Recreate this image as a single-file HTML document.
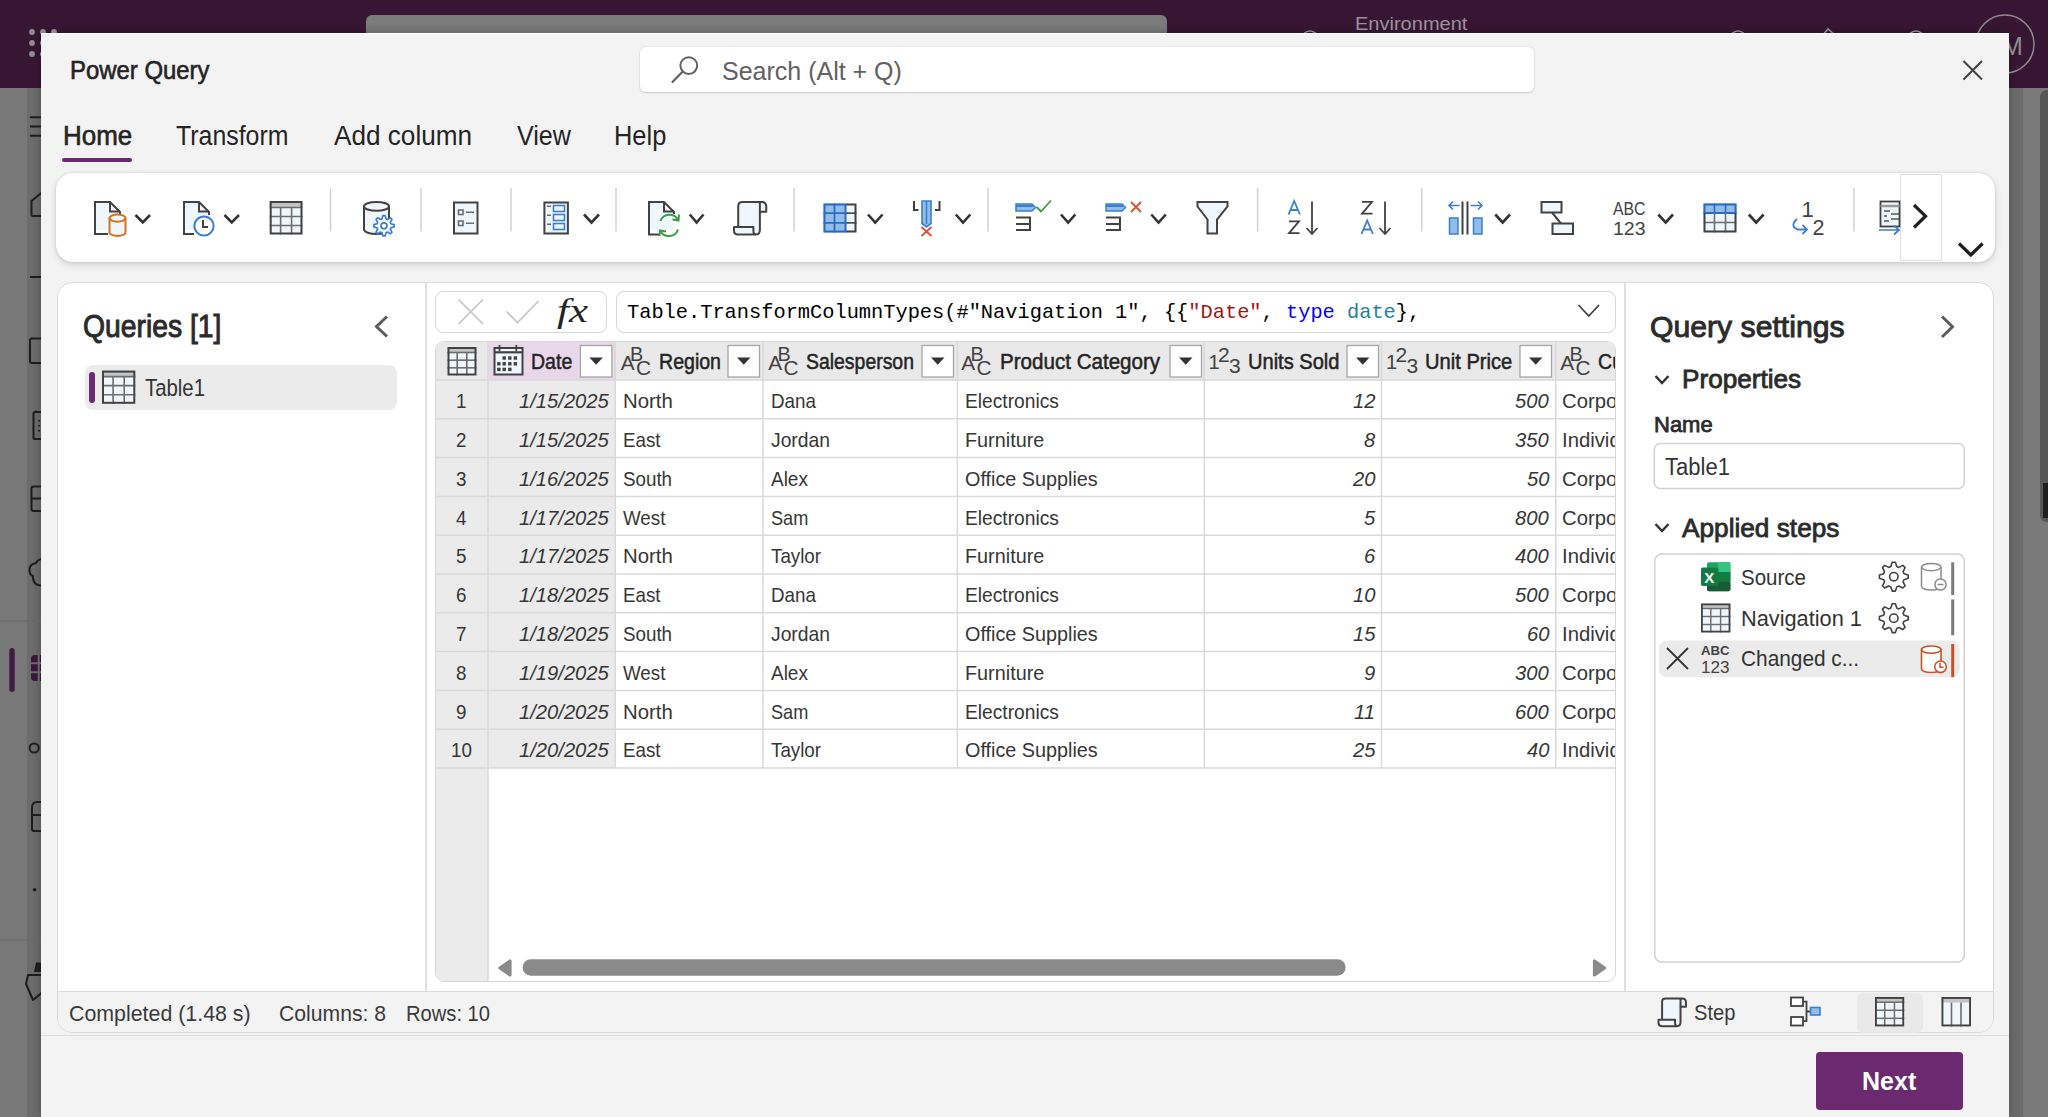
<!DOCTYPE html>
<html><head><meta charset="utf-8"><title>Power Query</title>
<style>
html,body{margin:0;padding:0;width:2048px;height:1117px;overflow:hidden;background:#7a7a7a;}
.b{position:absolute;box-sizing:border-box;}
.t{position:absolute;white-space:pre;transform-origin:0 0;}
svg.ov{position:absolute;left:0;top:0;}
</style></head><body>
<div class="b" style="left:0.00px;top:0.00px;width:2048.00px;height:88.00px;background:#371634;"></div>
<div class="b" style="left:0.00px;top:88.00px;width:27.00px;height:1029.00px;background:#787878;"></div>
<div class="b" style="left:27.00px;top:88.00px;width:14.00px;height:1029.00px;background:#6c6c6c;"></div>
<div class="b" style="left:2009.00px;top:88.00px;width:39.00px;height:1029.00px;background:#7a7a7a;"></div>
<div class="b" style="left:2009.00px;top:88.00px;width:14.00px;height:1029.00px;background:#6c6c6c;"></div>
<div class="b" style="left:2039.50px;top:90.00px;width:16.50px;height:432.00px;background:#565656;border-radius:7px;"></div>
<div class="b" style="left:2043.00px;top:483.00px;width:5.00px;height:35.00px;background:#1e1e1e;"></div>
<div class="b" style="left:366.00px;top:15.00px;width:801.00px;height:25.00px;background:#7b7b7b;border-radius:6px 6px 0 0;"></div>
<div class="b" style="left:41.00px;top:33.00px;width:1968.00px;height:1084.00px;background:#f3f3f3;border-top:1px solid #ffffff;box-shadow:0 0 9px rgba(0,0,0,0.28);"></div>
<div class="b" style="left:640.00px;top:47.00px;width:894.00px;height:45.00px;background:#ffffff;border-radius:6px;box-shadow:0 0 2px rgba(0,0,0,0.12),0 1px 2px rgba(0,0,0,0.14);"></div>
<div class="b" style="left:61.50px;top:158.00px;width:70.50px;height:4.00px;background:#6b2873;border-radius:2px;"></div>
<div class="b" style="left:56.00px;top:173.00px;width:1939.00px;height:89.00px;background:#ffffff;border-radius:17px;box-shadow:0 0 3px rgba(0,0,0,0.13),0 3px 7px rgba(0,0,0,0.13);"></div>
<div class="b" style="left:1899.50px;top:174.00px;width:42.50px;height:87.00px;background:#ffffff;border:1px solid #e0e0e0;"></div>
<div class="b" style="left:56.50px;top:281.50px;width:1937.50px;height:751.50px;background:#ffffff;border:1.3px solid #d9d9d9;border-radius:15px;overflow:hidden;"></div>
<div class="b" style="left:57.80px;top:990.50px;width:1934.90px;height:41.20px;background:#f3f3f3;border-top:1.3px solid #d9d9d9;border-radius:0 0 14px 14px;"></div>
<div class="b" style="left:41.00px;top:1035.00px;width:1968.00px;height:1.30px;background:#dcdcdc;"></div>
<div class="b" style="left:1815.50px;top:1051.50px;width:147.00px;height:58.50px;background:#6b2a70;border-radius:4px;"></div>
<div class="b" style="left:425.00px;top:282.50px;width:1.50px;height:708.50px;background:#e0e0e0;"></div>
<div class="b" style="left:1624.00px;top:282.50px;width:1.50px;height:708.50px;background:#e0e0e0;"></div>
<div class="b" style="left:85.30px;top:365.30px;width:311.70px;height:44.30px;background:#ebebeb;border-radius:8px;"></div>
<div class="b" style="left:88.50px;top:371.50px;width:6.00px;height:31.50px;background:#6b2873;border-radius:3px;"></div>
<div class="b" style="left:434.50px;top:290.50px;width:172.00px;height:42.00px;background:#fff;border:1px solid #d6d6d6;border-radius:8px;"></div>
<div class="b" style="left:615.50px;top:290.50px;width:1000.00px;height:42.00px;background:#fff;border:1px solid #d6d6d6;border-radius:8px;"></div>
<div class="b" style="left:435.00px;top:341.00px;width:1180.50px;height:641.00px;background:#fff;border:1px solid #d6d6d6;border-radius:9px;overflow:hidden;"></div>
<div class="b" style="left:436.00px;top:342.00px;width:1178.50px;height:38.00px;background:#e9e9e9;border-radius:8px 8px 0 0;"></div>
<div class="b" style="left:488.50px;top:342.00px;width:126.50px;height:38.00px;background:#e8d7e9;"></div>
<div class="b" style="left:436.00px;top:380.00px;width:52.00px;height:601.00px;background:#ebebeb;border-radius:0 0 0 8px;"></div>
<div class="b" style="left:488.00px;top:380.00px;width:127.30px;height:388.00px;background:#ebebeb;"></div>
<svg class="ov" width="2048" height="1117" viewBox="0 0 2048 1117">
<g stroke="#d9d9d9" stroke-width="1.5" fill="none">
<line x1="435" y1="380" x2="1615.5" y2="380"/>
<line x1="435" y1="418.80" x2="1615.5" y2="418.80"/>
<line x1="435" y1="457.60" x2="1615.5" y2="457.60"/>
<line x1="435" y1="496.40" x2="1615.5" y2="496.40"/>
<line x1="435" y1="535.20" x2="1615.5" y2="535.20"/>
<line x1="435" y1="574.00" x2="1615.5" y2="574.00"/>
<line x1="435" y1="612.80" x2="1615.5" y2="612.80"/>
<line x1="435" y1="651.60" x2="1615.5" y2="651.60"/>
<line x1="435" y1="690.40" x2="1615.5" y2="690.40"/>
<line x1="435" y1="729.20" x2="1615.5" y2="729.20"/>
<line x1="435" y1="768.00" x2="1615.5" y2="768.00"/>
<line x1="488" y1="341" x2="488" y2="982"/>
<line x1="615.3" y1="341" x2="615.3" y2="768.00"/>
<line x1="763" y1="341" x2="763" y2="768.00"/>
<line x1="957.4" y1="341" x2="957.4" y2="768.00"/>
<line x1="1204.3" y1="341" x2="1204.3" y2="768.00"/>
<line x1="1381.5" y1="341" x2="1381.5" y2="768.00"/>
<line x1="1555.8" y1="341" x2="1555.8" y2="768.00"/>
</g>
<rect x="580.4" y="345.5" width="31.5" height="31.5" fill="#fff" stroke="#a6a6a6" stroke-width="1.3"/>
<path d="M589.45 357.5 L602.85 357.5 L596.15 364.8 Z" fill="#333"/>
<rect x="728.0" y="345.5" width="31.5" height="31.5" fill="#fff" stroke="#a6a6a6" stroke-width="1.3"/>
<path d="M737.05 357.5 L750.45 357.5 L743.75 364.8 Z" fill="#333"/>
<rect x="922.0" y="345.5" width="31.5" height="31.5" fill="#fff" stroke="#a6a6a6" stroke-width="1.3"/>
<path d="M931.05 357.5 L944.45 357.5 L937.75 364.8 Z" fill="#333"/>
<rect x="1170.0" y="345.5" width="31.5" height="31.5" fill="#fff" stroke="#a6a6a6" stroke-width="1.3"/>
<path d="M1179.05 357.5 L1192.45 357.5 L1185.75 364.8 Z" fill="#333"/>
<rect x="1347.0" y="345.5" width="31.5" height="31.5" fill="#fff" stroke="#a6a6a6" stroke-width="1.3"/>
<path d="M1356.05 357.5 L1369.45 357.5 L1362.75 364.8 Z" fill="#333"/>
<rect x="1520.0" y="345.5" width="31.5" height="31.5" fill="#fff" stroke="#a6a6a6" stroke-width="1.3"/>
<path d="M1529.05 357.5 L1542.45 357.5 L1535.75 364.8 Z" fill="#333"/>
<path d="M510 961 L510 975 L500 968 Z" fill="#8a8a8a" stroke="#8a8a8a" stroke-width="3.2" stroke-linejoin="round"/>
<rect x="522.6" y="959.2" width="823" height="16.5" rx="8.25" fill="#8a8a8a"/>
<path d="M1594.5 961 L1594.5 975 L1604.5 968 Z" fill="#8a8a8a" stroke="#8a8a8a" stroke-width="3.2" stroke-linejoin="round"/>
<line x1="330.5" y1="188" x2="330.5" y2="231.5" stroke="#d1d1d1" stroke-width="1.5"/>
<line x1="421.0" y1="188" x2="421.0" y2="231.5" stroke="#d1d1d1" stroke-width="1.5"/>
<line x1="511.0" y1="188" x2="511.0" y2="231.5" stroke="#d1d1d1" stroke-width="1.5"/>
<line x1="616.0" y1="188" x2="616.0" y2="231.5" stroke="#d1d1d1" stroke-width="1.5"/>
<line x1="794.0" y1="188" x2="794.0" y2="231.5" stroke="#d1d1d1" stroke-width="1.5"/>
<line x1="988.0" y1="188" x2="988.0" y2="231.5" stroke="#d1d1d1" stroke-width="1.5"/>
<line x1="1257.6" y1="188" x2="1257.6" y2="231.5" stroke="#d1d1d1" stroke-width="1.5"/>
<line x1="1421.8" y1="188" x2="1421.8" y2="231.5" stroke="#d1d1d1" stroke-width="1.5"/>
<line x1="1854.0" y1="188" x2="1854.0" y2="231.5" stroke="#d1d1d1" stroke-width="1.5"/>
<path d="M94.5 201.5 H110 L120 211.5 V230 H94.5 Z" fill="#eff6fc"/>
<path d="M108 234 H95 V202 H110 L120 212 V214" fill="none" stroke="#424242" stroke-width="2"/>
<path d="M110 202 V211.5 H120" fill="none" stroke="#424242" stroke-width="2"/>
<path d="M109.50 218.10 A8.00 3.60 0 0 1 125.50 218.10 V232.40 A8.00 3.60 0 0 1 109.50 232.40 Z" fill="#eff6fc" stroke="#d7701d" stroke-width="2.0"/>
<path d="M109.50 218.10 A8.00 3.60 0 0 0 125.50 218.10" fill="none" stroke="#d7701d" stroke-width="2.0"/>
<path d="M135.50 215.00 L142.75 222.50 L150.00 215.00" fill="none" stroke="#333" stroke-width="2.6" stroke-linecap="butt" stroke-linejoin="miter"/>
<path d="M183.5 201.5 H199 L209 211.5 V230 H183.5 Z" fill="#eff6fc"/>
<path d="M194 234 H184 V202 H199 L209 212 V215" fill="none" stroke="#424242" stroke-width="2"/>
<path d="M199 202 V211.5 H209" fill="none" stroke="#424242" stroke-width="2"/>
<circle cx="204" cy="226" r="9.6" fill="#fff" stroke="#3a7fd0" stroke-width="2"/>
<path d="M203 220 V227 H208" fill="none" stroke="#424242" stroke-width="2"/>
<path d="M224.50 215.00 L231.75 222.50 L239.00 215.00" fill="none" stroke="#333" stroke-width="2.6" stroke-linecap="butt" stroke-linejoin="miter"/>
<rect x="269.70" y="201.00" width="32.80" height="33.50" fill="#eff6fc"/>
<rect x="269.70" y="201.00" width="32.80" height="6.50" fill="#c4c4c4"/>
<line x1="269.70" y1="207.50" x2="302.50" y2="207.50" stroke="#6e6e6e" stroke-width="1.6"/>
<line x1="269.70" y1="216.50" x2="302.50" y2="216.50" stroke="#6e6e6e" stroke-width="1.6"/>
<line x1="269.70" y1="225.50" x2="302.50" y2="225.50" stroke="#6e6e6e" stroke-width="1.6"/>
<line x1="280.63" y1="207.50" x2="280.63" y2="234.50" stroke="#6e6e6e" stroke-width="1.6"/>
<line x1="291.57" y1="207.50" x2="291.57" y2="234.50" stroke="#6e6e6e" stroke-width="1.6"/>
<rect x="270.70" y="202.00" width="30.80" height="31.50" fill="none" stroke="#424242" stroke-width="2.0"/>
<path d="M364.00 206.40 A12.50 4.40 0 0 1 389.00 206.40 V229.60 A12.50 4.40 0 0 1 364.00 229.60 Z" fill="#eff6fc" stroke="#424242" stroke-width="2.0"/>
<path d="M364.00 206.40 A12.50 4.40 0 0 0 389.00 206.40" fill="none" stroke="#424242" stroke-width="2.0"/>
<path d="M394.14 224.68 L394.14 226.92 L390.91 227.81 L390.31 229.27 L391.96 232.18 L390.38 233.76 L387.47 232.11 L386.01 232.71 L385.12 235.94 L382.88 235.94 L381.99 232.71 L380.53 232.11 L377.62 233.76 L376.04 232.18 L377.69 229.27 L377.09 227.81 L373.86 226.92 L373.86 224.68 L377.09 223.79 L377.69 222.33 L376.04 219.42 L377.62 217.84 L380.53 219.49 L381.99 218.89 L382.88 215.66 L385.12 215.66 L386.01 218.89 L387.47 219.49 L390.38 217.84 L391.96 219.42 L390.31 222.33 L390.91 223.79 Z" fill="#fff" stroke="#3a7fd0" stroke-width="1.7" stroke-linejoin="round"/>
<circle cx="384.00" cy="225.80" r="3.00" fill="none" stroke="#3a7fd0" stroke-width="1.7"/>
<rect x="454" y="202.5" width="23.5" height="31" fill="#eff6fc" stroke="#424242" stroke-width="2"/>
<rect x="458.5" y="210" width="4.5" height="4.5" fill="none" stroke="#6e6e6e" stroke-width="1.6"/>
<rect x="458.5" y="221" width="4.5" height="4.5" fill="none" stroke="#6e6e6e" stroke-width="1.6"/>
<path d="M466 212.2 H474 M466 223.2 H474" stroke="#6e6e6e" stroke-width="1.6"/>
<rect x="544.4" y="202.5" width="23.5" height="31" fill="#eff6fc" stroke="#424242" stroke-width="2"/>
<path d="M547 206.2 H551 M547 215.2 H551 M547 224.2 H551" stroke="#6e6e6e" stroke-width="1.6"/>
<rect x="553.5" y="205.5" width="11" height="6" fill="#eff6fc" stroke="#3a7fd0" stroke-width="1.6"/>
<rect x="553.5" y="214.5" width="11" height="6" fill="#eff6fc" stroke="#3a7fd0" stroke-width="1.6"/>
<rect x="553.5" y="223.5" width="11" height="6" fill="#eff6fc" stroke="#3a7fd0" stroke-width="1.6"/>
<path d="M584.00 214.50 L591.50 222.50 L599.00 214.50" fill="none" stroke="#333" stroke-width="2.6" stroke-linecap="butt" stroke-linejoin="miter"/>
<path d="M648.5 201.5 H664 L674 211.5 V230 H648.5 Z" fill="#eff6fc"/>
<path d="M659 234.5 H649 V202 H664 L674 212 V214" fill="none" stroke="#424242" stroke-width="2"/>
<path d="M664 202 V211.5 H674" fill="none" stroke="#424242" stroke-width="2"/>
<path d="M660.5 221 A9.5 9.5 0 0 1 678 220" fill="none" stroke="#3d9a48" stroke-width="2"/>
<path d="M678 229.5 A9.5 9.5 0 0 1 660.5 231" fill="none" stroke="#3d9a48" stroke-width="2"/>
<path d="M672.5 219.5 L678.5 220.5 L679 214.5" fill="none" stroke="#3d9a48" stroke-width="2"/>
<path d="M666 231.5 L660 230.5 L659.5 236" fill="none" stroke="#3d9a48" stroke-width="2"/>
<path d="M689.80 214.50 L696.65 222.50 L703.50 214.50" fill="none" stroke="#333" stroke-width="2.6" stroke-linecap="butt" stroke-linejoin="miter"/>
<rect x="823.5" y="203.5" width="22.0" height="29.0" fill="#93bde9"/>
<rect x="845.5" y="203.5" width="11.0" height="29.0" fill="#eff6fc"/>
<path d="M823.5 213.2 H845.5 M823.5 222.8 H845.5" stroke="#2a6bc2" stroke-width="1.8"/>
<path d="M845.5 213.2 H856.5 M845.5 222.8 H856.5" stroke="#555" stroke-width="1.8"/>
<path d="M834.5 203.5 V232.5" stroke="#2a6bc2" stroke-width="1.8"/>
<path d="M845.5 204.5 H855.5 V231.5 H845.5" fill="none" stroke="#424242" stroke-width="2"/>
<path d="M845.5 204.5 H824.5 V231.5 H845.5 Z" fill="none" stroke="#2a6bc2" stroke-width="2"/>
<path d="M868.00 214.50 L875.25 222.50 L882.50 214.50" fill="none" stroke="#333" stroke-width="2.6" stroke-linecap="butt" stroke-linejoin="miter"/>
<path d="M914 201 V210 H918.5 M939.5 201 V210 H935" fill="none" stroke="#424242" stroke-width="2"/>
<path d="M922 201 H931 V223.5 L926.5 227 L922 223.5 Z" fill="#93bde9" stroke="#3a7fd0" stroke-width="1.6"/>
<path d="M926.5 201 V224" stroke="#3a7fd0" stroke-width="1.6"/>
<path d="M921.5 227 L931.5 236 M931.5 227 L921.5 236" stroke="#d9512c" stroke-width="1.8"/>
<path d="M955.80 214.50 L963.05 222.50 L970.30 214.50" fill="none" stroke="#333" stroke-width="2.6" stroke-linecap="butt" stroke-linejoin="miter"/>
<path d="M1016 204 H1032 L1035.5 207.5 L1032 211 H1016 Z" fill="#93bde9" stroke="#3a7fd0" stroke-width="1.5"/>
<path d="M1016 206 H1033" stroke="#3a7fd0" stroke-width="2"/>
<path d="M1016 217.5 H1030 V230 H1016 M1016 224 H1030" fill="none" stroke="#424242" stroke-width="2"/>
<path d="M1036.5 207 L1041 211.5 L1051 200.5" fill="none" stroke="#3d9a48" stroke-width="1.8"/>
<path d="M1061.00 214.50 L1068.15 222.50 L1075.30 214.50" fill="none" stroke="#333" stroke-width="2.6" stroke-linecap="butt" stroke-linejoin="miter"/>
<path d="M1106 204 H1122 L1125.5 207.5 L1122 211 H1106 Z" fill="#93bde9" stroke="#3a7fd0" stroke-width="1.5"/>
<path d="M1106 206 H1123" stroke="#3a7fd0" stroke-width="2"/>
<path d="M1106 217.5 H1120 V230 H1106 M1106 224 H1120" fill="none" stroke="#424242" stroke-width="2"/>
<path d="M1131 202 L1141 212 M1141 202 L1131 212" stroke="#d9512c" stroke-width="1.8"/>
<path d="M1151.30 214.50 L1158.55 222.50 L1165.80 214.50" fill="none" stroke="#333" stroke-width="2.6" stroke-linecap="butt" stroke-linejoin="miter"/>
<path d="M1197.5 202 H1227.5 V206.5 L1217 219.5 V233.5 H1207.5 V219.5 L1197.5 206.5 Z" fill="#eff6fc" stroke="#424242" stroke-width="2" stroke-linejoin="miter"/>
<path d="M1288.5 214.5 L1294.2 201.0 L1299.9 214.5 M1290.8 210.0 H1297.6" fill="none" stroke="#3a7fd0" stroke-width="1.8"/>
<path d="M1289.0 221.4 H1299.0 L1289.0 233.1 H1299.5" fill="none" stroke="#424242" stroke-width="1.8"/>
<path d="M1312.0 201.5 V234.0 M1306.5 228.0 L1312.0 234.0 L1317.5 228.0" fill="none" stroke="#424242" stroke-width="1.8"/>
<path d="M1362.0 201.9 H1372.0 L1362.0 213.6 H1372.5" fill="none" stroke="#424242" stroke-width="1.8"/>
<path d="M1361.5 234.0 L1367.2 220.5 L1372.9 234.0 M1363.8 229.5 H1370.6" fill="none" stroke="#3a7fd0" stroke-width="1.8"/>
<path d="M1385.0 201.5 V234.0 M1379.5 228.0 L1385.0 234.0 L1390.5 228.0" fill="none" stroke="#424242" stroke-width="1.8"/>
<rect x="1449.5" y="218" width="8.5" height="16" fill="#93bde9" stroke="#3a7fd0" stroke-width="1.5"/>
<rect x="1473.5" y="218" width="8.5" height="16" fill="#93bde9" stroke="#3a7fd0" stroke-width="1.5"/>
<path d="M1462.5 201.5 V234.5 M1467.5 201.5 V234.5" stroke="#424242" stroke-width="2"/>
<path d="M1459.5 205.5 H1449 M1453 201.5 L1449 205.5 L1453 209.5 M1470.5 205.5 H1482 M1478 201.5 L1482 205.5 L1478 209.5" fill="none" stroke="#3a7fd0" stroke-width="1.6"/>
<path d="M1495.30 214.50 L1502.65 222.50 L1510.00 214.50" fill="none" stroke="#333" stroke-width="2.6" stroke-linecap="butt" stroke-linejoin="miter"/>
<rect x="1541.5" y="202" width="20" height="10.5" fill="#eff6fc" stroke="#424242" stroke-width="2"/>
<rect x="1552.5" y="223.5" width="20.5" height="10.5" fill="#eff6fc" stroke="#424242" stroke-width="2"/>
<path d="M1552 212.5 L1561 223.5" stroke="#424242" stroke-width="2"/>
<text x="1613" y="214.5" font-family="Liberation Sans" font-size="18.2" fill="#424242" textLength="32.5" lengthAdjust="spacingAndGlyphs">ABC</text>
<text x="1613" y="234.5" font-family="Liberation Sans" font-size="18.2" fill="#424242" textLength="32.5" lengthAdjust="spacingAndGlyphs">123</text>
<path d="M1658.30 214.50 L1665.65 222.50 L1673.00 214.50" fill="none" stroke="#333" stroke-width="2.6" stroke-linecap="butt" stroke-linejoin="miter"/>
<rect x="1703.5" y="203.5" width="33.0" height="29.0" fill="#eff6fc"/>
<rect x="1703.5" y="203.5" width="33.0" height="9.5" fill="#93bde9"/>
<path d="M1703.5 213 H1736.5" stroke="#2a6bc2" stroke-width="1.8"/>
<path d="M1703.5 222.5 H1736.5 M1714.5 213 V232.5 M1725.5 213 V232.5" stroke="#6e6e6e" stroke-width="1.6"/>
<path d="M1714.5 203.5 V213 M1725.5 203.5 V213" stroke="#2a6bc2" stroke-width="1.6"/>
<path d="M1704.5 213 V231.5 H1735.5 V213" fill="none" stroke="#424242" stroke-width="2"/>
<path d="M1704.5 213 V204.5 H1735.5 V213" fill="none" stroke="#2a6bc2" stroke-width="2"/>
<path d="M1748.80 214.50 L1756.20 222.50 L1763.60 214.50" fill="none" stroke="#333" stroke-width="2.6" stroke-linecap="butt" stroke-linejoin="miter"/>
<text x="1801.5" y="216.7" font-family="Liberation Sans" font-size="22" fill="#424242">1</text>
<text x="1812.5" y="234.6" font-family="Liberation Sans" font-size="21.5" fill="#424242">2</text>
<path d="M1797 219 Q1789.5 226 1797.5 229.5 H1806" fill="none" stroke="#3a7fd0" stroke-width="1.8"/>
<path d="M1802.5 225 L1807 229.5 L1802.5 234" fill="none" stroke="#3a7fd0" stroke-width="1.8"/>
<rect x="1880.5" y="201.5" width="19" height="25" fill="#eff6fc" stroke="#424242" stroke-width="1.8"/>
<path d="M1880.5 206 H1899.5" stroke="#999" stroke-width="2.5"/>
<path d="M1884 211 H1890 M1884 216 H1887 M1891 214 H1899 M1891 219 H1899 M1884 221 H1889" stroke="#555" stroke-width="1.5"/>
<path d="M1879 230 H1899 M1894 225.5 L1899 230 L1894 234.5" fill="none" stroke="#3a7fd0" stroke-width="1.7"/>
<path d="M1914 205 L1925.5 216.2 L1914 227.5" fill="none" stroke="#1f1f1f" stroke-width="3.2"/>
<path d="M1959 243.5 L1970.8 255 L1982.6 243.5" fill="none" stroke="#1f1f1f" stroke-width="3.2"/>
<clipPath id="outside"><path d="M0 0 H2048 V1117 H2009 V33 H41 V1117 H0 Z"/></clipPath>
<g clip-path="url(#outside)">
<circle cx="32" cy="32" r="2.9" fill="#8c8c8c"/>
<circle cx="43" cy="32" r="2.9" fill="#8c8c8c"/>
<circle cx="54" cy="32" r="2.9" fill="#8c8c8c"/>
<circle cx="32" cy="43" r="2.9" fill="#8c8c8c"/>
<circle cx="43" cy="43" r="2.9" fill="#8c8c8c"/>
<circle cx="54" cy="43" r="2.9" fill="#8c8c8c"/>
<circle cx="32" cy="54" r="2.9" fill="#8c8c8c"/>
<circle cx="43" cy="54" r="2.9" fill="#8c8c8c"/>
<circle cx="54" cy="54" r="2.9" fill="#8c8c8c"/>
<circle cx="2005" cy="44" r="29" fill="none" stroke="#8f8a8e" stroke-width="1.5"/>
<circle cx="1310" cy="39" r="8" fill="none" stroke="#8d8a8c" stroke-width="1.6"/>
<circle cx="1738" cy="39" r="8" fill="none" stroke="#8d8a8c" stroke-width="1.6"/>
<circle cx="1916" cy="39" r="8" fill="none" stroke="#8d8a8c" stroke-width="1.6"/>
<path d="M1822 36 L1828 29 L1836 36" fill="none" stroke="#8d8a8c" stroke-width="1.6"/>
<text x="2002" y="55" font-family="Liberation Sans" font-size="25" fill="#8f8a8e">M</text>
<path d="M30 117.3 H45 M30 126.6 H45 M30 135.8 H45" stroke="#1c1c1c" stroke-width="2"/>
<path d="M45 190 L31.5 201 V214.5 Q31.5 216 33 216 H45" fill="none" stroke="#1c1c1c" stroke-width="2"/>
<path d="M30 277 H45" stroke="#1c1c1c" stroke-width="2"/>
<path d="M45 338.5 H32 Q30 338.5 30 340.5 V361 Q30 363 32 363 H45" fill="none" stroke="#1c1c1c" stroke-width="2"/>
<path d="M45 412 H35 Q33.5 412 33.5 413.5 V437.5 Q33.5 439 35 439 H45 M36 410.5 V413" fill="none" stroke="#1c1c1c" stroke-width="2"/>
<path d="M39 420 V421.5 M39 425 V426.5 M39 430 V431.5" stroke="#1c1c1c" stroke-width="2"/>
<path d="M45 486.5 H33.5 Q31.5 486.5 31.5 488.5 V509 Q31.5 511 33.5 511 H45 M31.5 498.5 H45" fill="none" stroke="#1c1c1c" stroke-width="2"/>
<path d="M45 558.5 Q38 558.5 36 563 Q29.5 564 29.5 570 Q29.5 575 33 576 Q32.5 583 38 585 L45 586" fill="none" stroke="#1c1c1c" stroke-width="2"/>
<path d="M0 621 H45" stroke="#686868" stroke-width="1.2"/>
<rect x="9.3" y="648" width="5.4" height="44" rx="2.7" fill="#411b41"/>
<path d="M45 655 H35 Q31 655 31 659 V677 Q31 681 35 681 H45 Z" fill="#38153a"/>
<path d="M31 663.3 H45 M31 672.3 H45 M38.7 655 V681" stroke="#696969" stroke-width="2"/>
<circle cx="34.2" cy="748" r="4.6" fill="none" stroke="#1c1c1c" stroke-width="2"/>
<path d="M45 802 H37 Q32 802 32 808 V829 Q32 831 34 831 H45 M32 815 H45" fill="none" stroke="#1c1c1c" stroke-width="2"/>
<circle cx="34.6" cy="889.7" r="1.8" fill="#1c1c1c"/>
<path d="M0 940 H45" stroke="#686868" stroke-width="1.2"/>
<path d="M36 962.5 H45 V972 H34 Z" fill="#1c1c1c"/>
<path d="M45 975 H28 L26 984 L33 1000 L45 990" fill="none" stroke="#1c1c1c" stroke-width="2" stroke-linejoin="round"/>
</g>
<path d="M1963.5 61 L1982 79.5 M1982 61 L1963.5 79.5" stroke="#424242" stroke-width="2"/>
<circle cx="688.8" cy="65.6" r="8.4" fill="none" stroke="#616161" stroke-width="2"/>
<path d="M682.8 71.6 L672.5 82" stroke="#616161" stroke-width="2.2" stroke-linecap="round"/>
<path d="M387 316.5 L376.5 326.5 L387 336.5" fill="none" stroke="#5c5c5c" stroke-width="3"/>
<rect x="102.00" y="370.60" width="33.30" height="33.20" fill="#eff6fc"/>
<rect x="102.00" y="370.60" width="33.30" height="6.00" fill="#c4c4c4"/>
<line x1="102.00" y1="376.60" x2="135.30" y2="376.60" stroke="#6e6e6e" stroke-width="1.6"/>
<line x1="102.00" y1="385.67" x2="135.30" y2="385.67" stroke="#6e6e6e" stroke-width="1.6"/>
<line x1="102.00" y1="394.73" x2="135.30" y2="394.73" stroke="#6e6e6e" stroke-width="1.6"/>
<line x1="113.10" y1="376.60" x2="113.10" y2="403.80" stroke="#6e6e6e" stroke-width="1.6"/>
<line x1="124.20" y1="376.60" x2="124.20" y2="403.80" stroke="#6e6e6e" stroke-width="1.6"/>
<rect x="103.00" y="371.60" width="31.30" height="31.20" fill="none" stroke="#424242" stroke-width="2.0"/>
<path d="M458.5 299.5 L483 324 M483 299.5 L458.5 324" stroke="#c4c4c4" stroke-width="1.7"/>
<path d="M506.5 311.5 L517.5 322.5 L538.5 301" fill="none" stroke="#c4c4c4" stroke-width="1.7"/>
<text x="557" y="321.5" font-family="Liberation Serif" font-style="italic" font-size="33" fill="#242424" textLength="31" lengthAdjust="spacingAndGlyphs">fx</text>
<path d="M1578.5 305 L1588.8 316 L1599 305" fill="none" stroke="#424242" stroke-width="1.8"/>
<rect x="447.50" y="347.00" width="29.00" height="28.50" fill="#eff6fc"/>
<rect x="447.50" y="347.00" width="29.00" height="5.50" fill="#c4c4c4"/>
<line x1="447.50" y1="352.50" x2="476.50" y2="352.50" stroke="#6e6e6e" stroke-width="1.6"/>
<line x1="447.50" y1="360.17" x2="476.50" y2="360.17" stroke="#6e6e6e" stroke-width="1.6"/>
<line x1="447.50" y1="367.83" x2="476.50" y2="367.83" stroke="#6e6e6e" stroke-width="1.6"/>
<line x1="457.17" y1="352.50" x2="457.17" y2="375.50" stroke="#6e6e6e" stroke-width="1.6"/>
<line x1="466.83" y1="352.50" x2="466.83" y2="375.50" stroke="#6e6e6e" stroke-width="1.6"/>
<rect x="448.50" y="348.00" width="27.00" height="26.50" fill="none" stroke="#424242" stroke-width="2.0"/>
<rect x="494.5" y="348" width="28" height="26.5" fill="#eff6fc" stroke="#424242" stroke-width="2"/>
<path d="M494.5 352.3 H522.5" stroke="#424242" stroke-width="2.2"/>
<path d="M499.5 345 V351 M516.3 345 V351" stroke="#424242" stroke-width="1.8"/>
<rect x="502.5" y="356.3" width="3.4" height="3.4" fill="#424242"/>
<rect x="508.1" y="356.3" width="3.4" height="3.4" fill="#424242"/>
<rect x="513.7" y="356.3" width="3.4" height="3.4" fill="#424242"/>
<rect x="497.1" y="362.1" width="3.4" height="3.4" fill="#424242"/>
<rect x="502.5" y="362.1" width="3.4" height="3.4" fill="#424242"/>
<rect x="508.1" y="362.1" width="3.4" height="3.4" fill="#424242"/>
<rect x="513.7" y="362.1" width="3.4" height="3.4" fill="#424242"/>
<rect x="497.1" y="367.7" width="3.4" height="3.4" fill="#424242"/>
<rect x="502.5" y="367.7" width="3.4" height="3.4" fill="#424242"/>
<rect x="508.1" y="367.7" width="3.4" height="3.4" fill="#424242"/>
<text x="620.7" y="369.6" font-family="Liberation Sans" font-size="20.8" fill="#424242">A</text>
<text x="629.9" y="361" font-family="Liberation Sans" font-size="19.8" fill="#424242">B</text>
<text x="636.0" y="374.6" font-family="Liberation Sans" font-size="20.8" fill="#424242">C</text>
<text x="768.2" y="369.6" font-family="Liberation Sans" font-size="20.8" fill="#424242">A</text>
<text x="777.4" y="361" font-family="Liberation Sans" font-size="19.8" fill="#424242">B</text>
<text x="783.5" y="374.6" font-family="Liberation Sans" font-size="20.8" fill="#424242">C</text>
<text x="961.2" y="369.6" font-family="Liberation Sans" font-size="20.8" fill="#424242">A</text>
<text x="970.4" y="361" font-family="Liberation Sans" font-size="19.8" fill="#424242">B</text>
<text x="976.5" y="374.6" font-family="Liberation Sans" font-size="20.8" fill="#424242">C</text>
<text x="1208.5" y="369" font-family="Liberation Sans" font-size="20" fill="#424242">1</text>
<text x="1218.0" y="362" font-family="Liberation Sans" font-size="21" fill="#424242">2</text>
<text x="1229.0" y="373" font-family="Liberation Sans" font-size="21" fill="#424242">3</text>
<text x="1386.0" y="369" font-family="Liberation Sans" font-size="20" fill="#424242">1</text>
<text x="1395.5" y="362" font-family="Liberation Sans" font-size="21" fill="#424242">2</text>
<text x="1406.5" y="373" font-family="Liberation Sans" font-size="21" fill="#424242">3</text>
<clipPath id="cuclip"><rect x="1556" y="342" width="59" height="38"/></clipPath>
<g clip-path="url(#cuclip)">
<text x="1560.2" y="369.6" font-family="Liberation Sans" font-size="20.8" fill="#424242">A</text>
<text x="1569.4" y="361" font-family="Liberation Sans" font-size="19.8" fill="#424242">B</text>
<text x="1575.5" y="374.6" font-family="Liberation Sans" font-size="20.8" fill="#424242">C</text>
</g>
<path d="M1942 316.5 L1952.5 326.8 L1942 337" fill="none" stroke="#5c5c5c" stroke-width="3"/>
<path d="M1655.5 376 L1662 383 L1668.5 376" fill="none" stroke="#333" stroke-width="2.5"/>
<path d="M1655.5 524 L1662 531 L1668.5 524" fill="none" stroke="#333" stroke-width="2.5"/>
<rect x="1654.3" y="443.5" width="310" height="45" rx="6" fill="#fff" stroke="#d1d1d1" stroke-width="1.5"/>
<rect x="1654.8" y="554" width="309.5" height="408" rx="7" fill="#fff" stroke="#d1d1d1" stroke-width="1.5"/>
<rect x="1658.8" y="640.6" width="300.8" height="36.7" rx="8" fill="#ebebeb"/>
<rect x="1707" y="562.3" width="23.4" height="29" rx="2" fill="#21a366"/>
<rect x="1707" y="572" width="23.4" height="9.6" fill="#107c41"/>
<rect x="1707" y="581.6" width="23.4" height="9.7" rx="2" fill="#185c37"/>
<rect x="1718" y="562.3" width="12.4" height="9.7" fill="#33c481"/>
<rect x="1701" y="567.5" width="17.5" height="18.5" rx="1.8" fill="#107c41"/>
<text x="1704.2" y="582.5" font-family="Liberation Sans" font-weight="bold" font-size="15" fill="#fff">X</text>
<path d="M1908.21 575.11 L1908.21 578.29 L1903.98 579.66 L1903.09 581.81 L1905.12 585.77 L1902.87 588.02 L1898.91 585.99 L1896.76 586.88 L1895.39 591.11 L1892.21 591.11 L1890.84 586.88 L1888.69 585.99 L1884.73 588.02 L1882.48 585.77 L1884.51 581.81 L1883.62 579.66 L1879.39 578.29 L1879.39 575.11 L1883.62 573.74 L1884.51 571.59 L1882.48 567.63 L1884.73 565.38 L1888.69 567.41 L1890.84 566.52 L1892.21 562.29 L1895.39 562.29 L1896.76 566.52 L1898.91 567.41 L1902.87 565.38 L1905.12 567.63 L1903.09 571.59 L1903.98 573.74 Z" fill="#fff" stroke="#424242" stroke-width="1.6" stroke-linejoin="round"/>
<circle cx="1893.80" cy="576.70" r="4.20" fill="none" stroke="#424242" stroke-width="1.6"/>
<path d="M1908.21 616.61 L1908.21 619.79 L1903.98 621.16 L1903.09 623.31 L1905.12 627.27 L1902.87 629.52 L1898.91 627.49 L1896.76 628.38 L1895.39 632.61 L1892.21 632.61 L1890.84 628.38 L1888.69 627.49 L1884.73 629.52 L1882.48 627.27 L1884.51 623.31 L1883.62 621.16 L1879.39 619.79 L1879.39 616.61 L1883.62 615.24 L1884.51 613.09 L1882.48 609.13 L1884.73 606.88 L1888.69 608.91 L1890.84 608.02 L1892.21 603.79 L1895.39 603.79 L1896.76 608.02 L1898.91 608.91 L1902.87 606.88 L1905.12 609.13 L1903.09 613.09 L1903.98 615.24 Z" fill="#fff" stroke="#424242" stroke-width="1.6" stroke-linejoin="round"/>
<circle cx="1893.80" cy="618.20" r="4.20" fill="none" stroke="#424242" stroke-width="1.6"/>
<path d="M1921.50 567.10 A9.75 3.60 0 0 1 1941.00 567.10 V586.40 A9.75 3.60 0 0 1 1921.50 586.40 Z" fill="#fff" stroke="#8a8a8a" stroke-width="1.5"/>
<path d="M1921.50 567.10 A9.75 3.60 0 0 0 1941.00 567.10" fill="none" stroke="#8a8a8a" stroke-width="1.5"/>
<circle cx="1940.5" cy="584.5" r="5.6" fill="#fff" stroke="#8a8a8a" stroke-width="1.5"/>
<path d="M1937.5 584.5 H1943.5" stroke="#8a8a8a" stroke-width="1.5"/>
<rect x="1951.2" y="562.3" width="3" height="32.7" fill="#7a7a7a"/>
<rect x="1701.00" y="603.50" width="29.40" height="29.00" fill="#eff6fc"/>
<rect x="1701.00" y="603.50" width="29.40" height="5.00" fill="#c4c4c4"/>
<line x1="1701.00" y1="608.50" x2="1730.40" y2="608.50" stroke="#6e6e6e" stroke-width="1.4400000000000002"/>
<line x1="1701.00" y1="616.50" x2="1730.40" y2="616.50" stroke="#6e6e6e" stroke-width="1.4400000000000002"/>
<line x1="1701.00" y1="624.50" x2="1730.40" y2="624.50" stroke="#6e6e6e" stroke-width="1.4400000000000002"/>
<line x1="1710.80" y1="608.50" x2="1710.80" y2="632.50" stroke="#6e6e6e" stroke-width="1.4400000000000002"/>
<line x1="1720.60" y1="608.50" x2="1720.60" y2="632.50" stroke="#6e6e6e" stroke-width="1.4400000000000002"/>
<rect x="1701.90" y="604.40" width="27.60" height="27.20" fill="none" stroke="#424242" stroke-width="1.8"/>
<rect x="1951.2" y="599.4" width="3" height="35.8" fill="#7a7a7a"/>
<path d="M1667 648 L1688 669 M1688 648 L1667 669" stroke="#333" stroke-width="1.8"/>
<text x="1701" y="654.5" font-family="Liberation Sans" font-weight="bold" font-size="12.5" fill="#424242" textLength="28.5" lengthAdjust="spacingAndGlyphs">ABC</text>
<text x="1701" y="672.8" font-family="Liberation Sans" font-size="16.5" fill="#424242" textLength="28.5" lengthAdjust="spacingAndGlyphs">123</text>
<path d="M1921.50 649.60 A9.75 3.60 0 0 1 1941.00 649.60 V668.90 A9.75 3.60 0 0 1 1921.50 668.90 Z" fill="#fff" stroke="#c7522a" stroke-width="1.6"/>
<path d="M1921.50 649.60 A9.75 3.60 0 0 0 1941.00 649.60" fill="none" stroke="#c7522a" stroke-width="1.6"/>
<circle cx="1940.5" cy="666.8" r="5.8" fill="#fff" stroke="#c7522a" stroke-width="1.6"/>
<path d="M1940 663 V667.3 H1943.5" fill="none" stroke="#c7522a" stroke-width="1.5"/>
<rect x="1951.2" y="644" width="3" height="33" fill="#c7522a"/>
<path d="M 1662.09 1019.84 V 1001.89 Q 1662.09 998.50 1665.78 998.50 H 1682.27 Q 1685.95 998.50 1685.95 1002.38 V 1006.75 H 1680.52 V 1022.26 Q 1680.52 1026.14 1676.83 1026.14 H 1661.89 Q 1658.50 1026.14 1658.50 1022.75 V 1019.84 H 1674.99 V 1022.75 Q 1674.99 1026.14 1677.41 1026.14" fill="#eff6fc" stroke="#424242" stroke-width="2.0" stroke-linejoin="round"/>
<path d="M1680.52 998.50 V1006.75" stroke="#424242" stroke-width="2.0"/>
<rect x="1791" y="997.5" width="12" height="8.5" fill="#fff" stroke="#424242" stroke-width="1.8"/>
<rect x="1791" y="1017" width="12" height="8.5" fill="#fff" stroke="#424242" stroke-width="1.8"/>
<path d="M1803 1001.7 H1806.5 V1021.2 H1803 M1806.5 1011.5 H1810" fill="none" stroke="#424242" stroke-width="1.8"/>
<rect x="1810.5" y="1007.5" width="9.5" height="7.5" fill="#93bde9" stroke="#3a7fd0" stroke-width="1.6"/>
<rect x="1857" y="993" width="66" height="39.7" rx="6" fill="#e9e9e9"/>
<rect x="1875.00" y="997.00" width="29.20" height="29.40" fill="#eff6fc"/>
<rect x="1875.00" y="997.00" width="29.20" height="5.20" fill="#c4c4c4"/>
<line x1="1875.00" y1="1002.20" x2="1904.20" y2="1002.20" stroke="#6e6e6e" stroke-width="1.52"/>
<line x1="1875.00" y1="1010.27" x2="1904.20" y2="1010.27" stroke="#6e6e6e" stroke-width="1.52"/>
<line x1="1875.00" y1="1018.33" x2="1904.20" y2="1018.33" stroke="#6e6e6e" stroke-width="1.52"/>
<line x1="1884.73" y1="1002.20" x2="1884.73" y2="1026.40" stroke="#6e6e6e" stroke-width="1.52"/>
<line x1="1894.47" y1="1002.20" x2="1894.47" y2="1026.40" stroke="#6e6e6e" stroke-width="1.52"/>
<rect x="1875.95" y="997.95" width="27.30" height="27.50" fill="none" stroke="#424242" stroke-width="1.9"/>
<rect x="1941.5" y="997" width="29.5" height="29.4" fill="#eff6fc"/>
<rect x="1941.5" y="997" width="29.5" height="5.5" fill="#c4c4c4"/>
<path d="M1951.5 1002.5 V1026.4 M1961 1002.5 V1026.4" stroke="#6e6e6e" stroke-width="1.6"/>
<rect x="1942.45" y="997.95" width="27.6" height="27.5" fill="none" stroke="#424242" stroke-width="1.9"/>
<path d="M 738.22 227.08 V 205.99 Q 738.22 202.00 742.55 202.00 H 761.93 Q 766.26 202.00 766.26 206.56 V 211.69 H 759.88 V 229.93 Q 759.88 234.49 755.55 234.49 H 737.99 Q 734.00 234.49 734.00 230.50 V 227.08 H 753.38 V 230.50 Q 753.38 234.49 756.23 234.49" fill="#eff6fc" stroke="#424242" stroke-width="2.0" stroke-linejoin="round"/>
<path d="M759.88 202.00 V211.69" stroke="#424242" stroke-width="2.0"/>
</svg>
<span class="t" style="left:1354.50px;top:13.76px;font-size:19.186px;line-height:19.186px;font-family:'Liberation Sans',sans-serif;color:#9d8f9b;transform:scaleX(1.0445);">Environment</span>
<span class="t" style="left:69.70px;top:58.05px;font-size:25.581px;line-height:25.581px;font-family:'Liberation Sans',sans-serif;color:#242424;transform:scaleX(0.9346);-webkit-text-stroke:0.60px #242424;">Power Query</span>
<span class="t" style="left:722.00px;top:58.11px;font-size:26.453px;line-height:26.453px;font-family:'Liberation Sans',sans-serif;color:#616161;transform:scaleX(0.9454);">Search (Alt + Q)</span>
<span class="t" style="left:62.70px;top:122.22px;font-size:27.616px;line-height:27.616px;font-family:'Liberation Sans',sans-serif;color:#242424;transform:scaleX(0.9406);-webkit-text-stroke:0.60px #242424;">Home</span>
<span class="t" style="left:176.00px;top:122.22px;font-size:27.616px;line-height:27.616px;font-family:'Liberation Sans',sans-serif;color:#242424;transform:scaleX(0.9007);">Transform</span>
<span class="t" style="left:334.20px;top:122.22px;font-size:27.616px;line-height:27.616px;font-family:'Liberation Sans',sans-serif;color:#242424;transform:scaleX(0.9469);">Add column</span>
<span class="t" style="left:516.70px;top:122.22px;font-size:27.616px;line-height:27.616px;font-family:'Liberation Sans',sans-serif;color:#242424;transform:scaleX(0.9086);">View</span>
<span class="t" style="left:614.10px;top:122.22px;font-size:27.616px;line-height:27.616px;font-family:'Liberation Sans',sans-serif;color:#242424;transform:scaleX(0.9207);">Help</span>
<span class="t" style="left:82.60px;top:310.56px;font-size:30.523px;line-height:30.523px;font-family:'Liberation Sans',sans-serif;color:#2b2b2b;transform:scaleX(0.9271);-webkit-text-stroke:0.95px #2b2b2b;">Queries [1]</span>
<span class="t" style="left:145.00px;top:376.81px;font-size:23.256px;line-height:23.256px;font-family:'Liberation Sans',sans-serif;color:#333333;transform:scaleX(0.8755);">Table1</span>
<span class="t" style="left:1650.20px;top:311.53px;font-size:30.087px;line-height:30.087px;font-family:'Liberation Sans',sans-serif;color:#2b2b2b;transform:scaleX(1.0032);-webkit-text-stroke:0.95px #2b2b2b;">Query settings</span>
<span class="t" style="left:1681.70px;top:367.40px;font-size:25.872px;line-height:25.872px;font-family:'Liberation Sans',sans-serif;color:#2b2b2b;transform:scaleX(1.0108);-webkit-text-stroke:0.85px #2b2b2b;">Properties</span>
<span class="t" style="left:1654.00px;top:414.51px;font-size:21.366px;line-height:21.366px;font-family:'Liberation Sans',sans-serif;color:#2b2b2b;transform:scaleX(1.0297);-webkit-text-stroke:0.75px #2b2b2b;">Name</span>
<span class="t" style="left:1665.00px;top:455.08px;font-size:24.709px;line-height:24.709px;font-family:'Liberation Sans',sans-serif;color:#333333;transform:scaleX(0.8926);">Table1</span>
<span class="t" style="left:1681.50px;top:514.81px;font-size:26.453px;line-height:26.453px;font-family:'Liberation Sans',sans-serif;color:#2b2b2b;transform:scaleX(0.9916);-webkit-text-stroke:0.85px #2b2b2b;">Applied steps</span>
<span class="t" style="left:1740.60px;top:567.18px;font-size:22.238px;line-height:22.238px;font-family:'Liberation Sans',sans-serif;color:#333333;transform:scaleX(0.9226);">Source</span>
<span class="t" style="left:1741.00px;top:606.81px;font-size:22.674px;line-height:22.674px;font-family:'Liberation Sans',sans-serif;color:#333333;transform:scaleX(0.9600);">Navigation 1</span>
<span class="t" style="left:1740.60px;top:648.20px;font-size:22.093px;line-height:22.093px;font-family:'Liberation Sans',sans-serif;color:#333333;transform:scaleX(0.9436);">Changed c...</span>
<span class="t" style="left:69.30px;top:1002.08px;font-size:22.820px;line-height:22.820px;font-family:'Liberation Sans',sans-serif;color:#3a3a3a;transform:scaleX(0.9363);">Completed (1.48 s)</span>
<span class="t" style="left:278.60px;top:1002.08px;font-size:22.820px;line-height:22.820px;font-family:'Liberation Sans',sans-serif;color:#3a3a3a;transform:scaleX(0.9279);">Columns: 8</span>
<span class="t" style="left:406.00px;top:1002.08px;font-size:22.820px;line-height:22.820px;font-family:'Liberation Sans',sans-serif;color:#3a3a3a;transform:scaleX(0.8832);">Rows: 10</span>
<span class="t" style="left:1694.00px;top:1001.98px;font-size:22.238px;line-height:22.238px;font-family:'Liberation Sans',sans-serif;color:#3a3a3a;transform:scaleX(0.9050);">Step</span>
<span class="t" style="left:1862.00px;top:1068.21px;font-size:26.453px;line-height:26.453px;font-family:'Liberation Sans',sans-serif;color:#ffffff;font-weight:bold;transform:scaleX(0.9468);">Next</span>
<span class="t" style="left:531.00px;top:350.54px;font-size:21.802px;line-height:21.802px;font-family:'Liberation Sans',sans-serif;color:#242424;transform:scaleX(0.8969);-webkit-text-stroke:0.50px #242424;">Date</span>
<span class="t" style="left:658.60px;top:350.54px;font-size:21.802px;line-height:21.802px;font-family:'Liberation Sans',sans-serif;color:#242424;transform:scaleX(0.8974);-webkit-text-stroke:0.50px #242424;">Region</span>
<span class="t" style="left:806.00px;top:350.54px;font-size:21.802px;line-height:21.802px;font-family:'Liberation Sans',sans-serif;color:#242424;transform:scaleX(0.8911);-webkit-text-stroke:0.50px #242424;">Salesperson</span>
<span class="t" style="left:999.80px;top:350.54px;font-size:21.802px;line-height:21.802px;font-family:'Liberation Sans',sans-serif;color:#242424;transform:scaleX(0.9442);-webkit-text-stroke:0.50px #242424;">Product Category</span>
<span class="t" style="left:1247.50px;top:350.54px;font-size:21.802px;line-height:21.802px;font-family:'Liberation Sans',sans-serif;color:#242424;transform:scaleX(0.9208);-webkit-text-stroke:0.50px #242424;">Units Sold</span>
<span class="t" style="left:1424.70px;top:350.54px;font-size:21.802px;line-height:21.802px;font-family:'Liberation Sans',sans-serif;color:#242424;transform:scaleX(0.9237);-webkit-text-stroke:0.50px #242424;">Unit Price</span>
<div style="position:absolute;left:1556.50px;top:342.00px;width:58.50px;height:38.00px;overflow:hidden;">
<span class="t" style="left:41.00px;top:8.54px;font-size:21.802px;line-height:21.802px;font-family:'Liberation Sans',sans-serif;color:#242424;transform:scaleX(0.8974);-webkit-text-stroke:0.50px #242424;">Cust</span>
</div>
<span class="t" style="left:456.28px;top:391.28px;font-size:20.930px;line-height:20.930px;font-family:'Liberation Sans',sans-serif;color:#363636;transform:scaleX(0.8970);">1</span>
<span class="t" style="left:518.90px;top:391.28px;font-size:20.930px;line-height:20.930px;font-family:'Liberation Sans',sans-serif;color:#363636;font-style:italic;transform:scaleX(0.9648);">1/15/2025</span>
<span class="t" style="left:623.30px;top:391.28px;font-size:20.930px;line-height:20.930px;font-family:'Liberation Sans',sans-serif;color:#363636;transform:scaleX(0.9731);">North</span>
<span class="t" style="left:770.50px;top:391.28px;font-size:20.930px;line-height:20.930px;font-family:'Liberation Sans',sans-serif;color:#363636;transform:scaleX(0.8972);">Dana</span>
<span class="t" style="left:964.50px;top:391.28px;font-size:20.930px;line-height:20.930px;font-family:'Liberation Sans',sans-serif;color:#363636;transform:scaleX(0.9182);">Electronics</span>
<span class="t" style="left:1352.85px;top:391.28px;font-size:20.930px;line-height:20.930px;font-family:'Liberation Sans',sans-serif;color:#363636;font-style:italic;transform:scaleX(0.9648);">12</span>
<span class="t" style="left:1515.32px;top:391.28px;font-size:20.930px;line-height:20.930px;font-family:'Liberation Sans',sans-serif;color:#363636;font-style:italic;transform:scaleX(0.9648);">500</span>
<span class="t" style="left:456.28px;top:430.08px;font-size:20.930px;line-height:20.930px;font-family:'Liberation Sans',sans-serif;color:#363636;transform:scaleX(0.8970);">2</span>
<span class="t" style="left:518.90px;top:430.08px;font-size:20.930px;line-height:20.930px;font-family:'Liberation Sans',sans-serif;color:#363636;font-style:italic;transform:scaleX(0.9648);">1/15/2025</span>
<span class="t" style="left:623.30px;top:430.08px;font-size:20.930px;line-height:20.930px;font-family:'Liberation Sans',sans-serif;color:#363636;transform:scaleX(0.8970);">East</span>
<span class="t" style="left:770.50px;top:430.08px;font-size:20.930px;line-height:20.930px;font-family:'Liberation Sans',sans-serif;color:#363636;transform:scaleX(0.9218);">Jordan</span>
<span class="t" style="left:964.50px;top:430.08px;font-size:20.930px;line-height:20.930px;font-family:'Liberation Sans',sans-serif;color:#363636;transform:scaleX(0.9467);">Furniture</span>
<span class="t" style="left:1364.07px;top:430.08px;font-size:20.930px;line-height:20.930px;font-family:'Liberation Sans',sans-serif;color:#363636;font-style:italic;transform:scaleX(0.9648);">8</span>
<span class="t" style="left:1515.32px;top:430.08px;font-size:20.930px;line-height:20.930px;font-family:'Liberation Sans',sans-serif;color:#363636;font-style:italic;transform:scaleX(0.9648);">350</span>
<span class="t" style="left:456.28px;top:468.88px;font-size:20.930px;line-height:20.930px;font-family:'Liberation Sans',sans-serif;color:#363636;transform:scaleX(0.8970);">3</span>
<span class="t" style="left:518.90px;top:468.88px;font-size:20.930px;line-height:20.930px;font-family:'Liberation Sans',sans-serif;color:#363636;font-style:italic;transform:scaleX(0.9648);">1/16/2025</span>
<span class="t" style="left:623.30px;top:468.88px;font-size:20.930px;line-height:20.930px;font-family:'Liberation Sans',sans-serif;color:#363636;transform:scaleX(0.8970);">South</span>
<span class="t" style="left:770.50px;top:468.88px;font-size:20.930px;line-height:20.930px;font-family:'Liberation Sans',sans-serif;color:#363636;transform:scaleX(0.9064);">Alex</span>
<span class="t" style="left:964.50px;top:468.88px;font-size:20.930px;line-height:20.930px;font-family:'Liberation Sans',sans-serif;color:#363636;transform:scaleX(0.9459);">Office Supplies</span>
<span class="t" style="left:1352.85px;top:468.88px;font-size:20.930px;line-height:20.930px;font-family:'Liberation Sans',sans-serif;color:#363636;font-style:italic;transform:scaleX(0.9648);">20</span>
<span class="t" style="left:1526.55px;top:468.88px;font-size:20.930px;line-height:20.930px;font-family:'Liberation Sans',sans-serif;color:#363636;font-style:italic;transform:scaleX(0.9648);">50</span>
<span class="t" style="left:456.28px;top:507.68px;font-size:20.930px;line-height:20.930px;font-family:'Liberation Sans',sans-serif;color:#363636;transform:scaleX(0.8970);">4</span>
<span class="t" style="left:518.90px;top:507.68px;font-size:20.930px;line-height:20.930px;font-family:'Liberation Sans',sans-serif;color:#363636;font-style:italic;transform:scaleX(0.9648);">1/17/2025</span>
<span class="t" style="left:623.30px;top:507.68px;font-size:20.930px;line-height:20.930px;font-family:'Liberation Sans',sans-serif;color:#363636;transform:scaleX(0.8970);">West</span>
<span class="t" style="left:770.50px;top:507.68px;font-size:20.930px;line-height:20.930px;font-family:'Liberation Sans',sans-serif;color:#363636;transform:scaleX(0.8668);">Sam</span>
<span class="t" style="left:964.50px;top:507.68px;font-size:20.930px;line-height:20.930px;font-family:'Liberation Sans',sans-serif;color:#363636;transform:scaleX(0.9182);">Electronics</span>
<span class="t" style="left:1364.01px;top:507.68px;font-size:20.930px;line-height:20.930px;font-family:'Liberation Sans',sans-serif;color:#363636;font-style:italic;transform:scaleX(0.9648);">5</span>
<span class="t" style="left:1515.32px;top:507.68px;font-size:20.930px;line-height:20.930px;font-family:'Liberation Sans',sans-serif;color:#363636;font-style:italic;transform:scaleX(0.9648);">800</span>
<span class="t" style="left:456.28px;top:546.48px;font-size:20.930px;line-height:20.930px;font-family:'Liberation Sans',sans-serif;color:#363636;transform:scaleX(0.8970);">5</span>
<span class="t" style="left:518.90px;top:546.48px;font-size:20.930px;line-height:20.930px;font-family:'Liberation Sans',sans-serif;color:#363636;font-style:italic;transform:scaleX(0.9648);">1/17/2025</span>
<span class="t" style="left:623.30px;top:546.48px;font-size:20.930px;line-height:20.930px;font-family:'Liberation Sans',sans-serif;color:#363636;transform:scaleX(0.9731);">North</span>
<span class="t" style="left:770.50px;top:546.48px;font-size:20.930px;line-height:20.930px;font-family:'Liberation Sans',sans-serif;color:#363636;transform:scaleX(0.8970);">Taylor</span>
<span class="t" style="left:964.50px;top:546.48px;font-size:20.930px;line-height:20.930px;font-family:'Liberation Sans',sans-serif;color:#363636;transform:scaleX(0.9467);">Furniture</span>
<span class="t" style="left:1364.05px;top:546.48px;font-size:20.930px;line-height:20.930px;font-family:'Liberation Sans',sans-serif;color:#363636;font-style:italic;transform:scaleX(0.9648);">6</span>
<span class="t" style="left:1515.32px;top:546.48px;font-size:20.930px;line-height:20.930px;font-family:'Liberation Sans',sans-serif;color:#363636;font-style:italic;transform:scaleX(0.9648);">400</span>
<span class="t" style="left:456.28px;top:585.28px;font-size:20.930px;line-height:20.930px;font-family:'Liberation Sans',sans-serif;color:#363636;transform:scaleX(0.8970);">6</span>
<span class="t" style="left:518.90px;top:585.28px;font-size:20.930px;line-height:20.930px;font-family:'Liberation Sans',sans-serif;color:#363636;font-style:italic;transform:scaleX(0.9648);">1/18/2025</span>
<span class="t" style="left:623.30px;top:585.28px;font-size:20.930px;line-height:20.930px;font-family:'Liberation Sans',sans-serif;color:#363636;transform:scaleX(0.8970);">East</span>
<span class="t" style="left:770.50px;top:585.28px;font-size:20.930px;line-height:20.930px;font-family:'Liberation Sans',sans-serif;color:#363636;transform:scaleX(0.8972);">Dana</span>
<span class="t" style="left:964.50px;top:585.28px;font-size:20.930px;line-height:20.930px;font-family:'Liberation Sans',sans-serif;color:#363636;transform:scaleX(0.9182);">Electronics</span>
<span class="t" style="left:1352.85px;top:585.28px;font-size:20.930px;line-height:20.930px;font-family:'Liberation Sans',sans-serif;color:#363636;font-style:italic;transform:scaleX(0.9648);">10</span>
<span class="t" style="left:1515.32px;top:585.28px;font-size:20.930px;line-height:20.930px;font-family:'Liberation Sans',sans-serif;color:#363636;font-style:italic;transform:scaleX(0.9648);">500</span>
<span class="t" style="left:456.28px;top:624.08px;font-size:20.930px;line-height:20.930px;font-family:'Liberation Sans',sans-serif;color:#363636;transform:scaleX(0.8970);">7</span>
<span class="t" style="left:518.90px;top:624.08px;font-size:20.930px;line-height:20.930px;font-family:'Liberation Sans',sans-serif;color:#363636;font-style:italic;transform:scaleX(0.9648);">1/18/2025</span>
<span class="t" style="left:623.30px;top:624.08px;font-size:20.930px;line-height:20.930px;font-family:'Liberation Sans',sans-serif;color:#363636;transform:scaleX(0.8970);">South</span>
<span class="t" style="left:770.50px;top:624.08px;font-size:20.930px;line-height:20.930px;font-family:'Liberation Sans',sans-serif;color:#363636;transform:scaleX(0.9218);">Jordan</span>
<span class="t" style="left:964.50px;top:624.08px;font-size:20.930px;line-height:20.930px;font-family:'Liberation Sans',sans-serif;color:#363636;transform:scaleX(0.9459);">Office Supplies</span>
<span class="t" style="left:1352.78px;top:624.08px;font-size:20.930px;line-height:20.930px;font-family:'Liberation Sans',sans-serif;color:#363636;font-style:italic;transform:scaleX(0.9648);">15</span>
<span class="t" style="left:1526.55px;top:624.08px;font-size:20.930px;line-height:20.930px;font-family:'Liberation Sans',sans-serif;color:#363636;font-style:italic;transform:scaleX(0.9648);">60</span>
<span class="t" style="left:456.28px;top:662.88px;font-size:20.930px;line-height:20.930px;font-family:'Liberation Sans',sans-serif;color:#363636;transform:scaleX(0.8970);">8</span>
<span class="t" style="left:518.90px;top:662.88px;font-size:20.930px;line-height:20.930px;font-family:'Liberation Sans',sans-serif;color:#363636;font-style:italic;transform:scaleX(0.9648);">1/19/2025</span>
<span class="t" style="left:623.30px;top:662.88px;font-size:20.930px;line-height:20.930px;font-family:'Liberation Sans',sans-serif;color:#363636;transform:scaleX(0.8970);">West</span>
<span class="t" style="left:770.50px;top:662.88px;font-size:20.930px;line-height:20.930px;font-family:'Liberation Sans',sans-serif;color:#363636;transform:scaleX(0.9064);">Alex</span>
<span class="t" style="left:964.50px;top:662.88px;font-size:20.930px;line-height:20.930px;font-family:'Liberation Sans',sans-serif;color:#363636;transform:scaleX(0.9467);">Furniture</span>
<span class="t" style="left:1364.07px;top:662.88px;font-size:20.930px;line-height:20.930px;font-family:'Liberation Sans',sans-serif;color:#363636;font-style:italic;transform:scaleX(0.9648);">9</span>
<span class="t" style="left:1515.32px;top:662.88px;font-size:20.930px;line-height:20.930px;font-family:'Liberation Sans',sans-serif;color:#363636;font-style:italic;transform:scaleX(0.9648);">300</span>
<span class="t" style="left:456.28px;top:701.68px;font-size:20.930px;line-height:20.930px;font-family:'Liberation Sans',sans-serif;color:#363636;transform:scaleX(0.8970);">9</span>
<span class="t" style="left:518.90px;top:701.68px;font-size:20.930px;line-height:20.930px;font-family:'Liberation Sans',sans-serif;color:#363636;font-style:italic;transform:scaleX(0.9648);">1/20/2025</span>
<span class="t" style="left:623.30px;top:701.68px;font-size:20.930px;line-height:20.930px;font-family:'Liberation Sans',sans-serif;color:#363636;transform:scaleX(0.9731);">North</span>
<span class="t" style="left:770.50px;top:701.68px;font-size:20.930px;line-height:20.930px;font-family:'Liberation Sans',sans-serif;color:#363636;transform:scaleX(0.8668);">Sam</span>
<span class="t" style="left:964.50px;top:701.68px;font-size:20.930px;line-height:20.930px;font-family:'Liberation Sans',sans-serif;color:#363636;transform:scaleX(0.9182);">Electronics</span>
<span class="t" style="left:1354.34px;top:701.68px;font-size:20.930px;line-height:20.930px;font-family:'Liberation Sans',sans-serif;color:#363636;font-style:italic;transform:scaleX(0.9648);">11</span>
<span class="t" style="left:1515.32px;top:701.68px;font-size:20.930px;line-height:20.930px;font-family:'Liberation Sans',sans-serif;color:#363636;font-style:italic;transform:scaleX(0.9648);">600</span>
<span class="t" style="left:451.06px;top:740.48px;font-size:20.930px;line-height:20.930px;font-family:'Liberation Sans',sans-serif;color:#363636;transform:scaleX(0.8970);">10</span>
<span class="t" style="left:518.90px;top:740.48px;font-size:20.930px;line-height:20.930px;font-family:'Liberation Sans',sans-serif;color:#363636;font-style:italic;transform:scaleX(0.9648);">1/20/2025</span>
<span class="t" style="left:623.30px;top:740.48px;font-size:20.930px;line-height:20.930px;font-family:'Liberation Sans',sans-serif;color:#363636;transform:scaleX(0.8970);">East</span>
<span class="t" style="left:770.50px;top:740.48px;font-size:20.930px;line-height:20.930px;font-family:'Liberation Sans',sans-serif;color:#363636;transform:scaleX(0.8970);">Taylor</span>
<span class="t" style="left:964.50px;top:740.48px;font-size:20.930px;line-height:20.930px;font-family:'Liberation Sans',sans-serif;color:#363636;transform:scaleX(0.9459);">Office Supplies</span>
<span class="t" style="left:1352.78px;top:740.48px;font-size:20.930px;line-height:20.930px;font-family:'Liberation Sans',sans-serif;color:#363636;font-style:italic;transform:scaleX(0.9648);">25</span>
<span class="t" style="left:1526.55px;top:740.48px;font-size:20.930px;line-height:20.930px;font-family:'Liberation Sans',sans-serif;color:#363636;font-style:italic;transform:scaleX(0.9648);">40</span>
<div style="position:absolute;left:1556.50px;top:380.00px;width:58.50px;height:388.00px;overflow:hidden;">
<span class="t" style="left:5.80px;top:11.28px;font-size:20.930px;line-height:20.930px;font-family:'Liberation Sans',sans-serif;color:#363636;transform:scaleX(0.9700);">Corporate</span>
<span class="t" style="left:5.80px;top:50.08px;font-size:20.930px;line-height:20.930px;font-family:'Liberation Sans',sans-serif;color:#363636;transform:scaleX(0.9700);">Individual</span>
<span class="t" style="left:5.80px;top:88.88px;font-size:20.930px;line-height:20.930px;font-family:'Liberation Sans',sans-serif;color:#363636;transform:scaleX(0.9700);">Corporate</span>
<span class="t" style="left:5.80px;top:127.68px;font-size:20.930px;line-height:20.930px;font-family:'Liberation Sans',sans-serif;color:#363636;transform:scaleX(0.9700);">Corporate</span>
<span class="t" style="left:5.80px;top:166.48px;font-size:20.930px;line-height:20.930px;font-family:'Liberation Sans',sans-serif;color:#363636;transform:scaleX(0.9700);">Individual</span>
<span class="t" style="left:5.80px;top:205.28px;font-size:20.930px;line-height:20.930px;font-family:'Liberation Sans',sans-serif;color:#363636;transform:scaleX(0.9700);">Corporate</span>
<span class="t" style="left:5.80px;top:244.08px;font-size:20.930px;line-height:20.930px;font-family:'Liberation Sans',sans-serif;color:#363636;transform:scaleX(0.9700);">Individual</span>
<span class="t" style="left:5.80px;top:282.88px;font-size:20.930px;line-height:20.930px;font-family:'Liberation Sans',sans-serif;color:#363636;transform:scaleX(0.9700);">Corporate</span>
<span class="t" style="left:5.80px;top:321.68px;font-size:20.930px;line-height:20.930px;font-family:'Liberation Sans',sans-serif;color:#363636;transform:scaleX(0.9700);">Corporate</span>
<span class="t" style="left:5.80px;top:360.48px;font-size:20.930px;line-height:20.930px;font-family:'Liberation Sans',sans-serif;color:#363636;transform:scaleX(0.9700);">Individual</span>
</div>
<span class="t" style="left:627.00px;top:302.10px;font-size:21.00px;line-height:21.00px;font-family:'Liberation Mono',monospace;transform:scaleX(0.9683);"><span style="color:#000000">Table.TransformColumnTypes(#&quot;Navigation 1&quot;, {{</span><span style="color:#a31515">&quot;Date&quot;</span><span style="color:#000000">, </span><span style="color:#0000ff">type</span><span style="color:#000000"> </span><span style="color:#267f99">date</span><span style="color:#000000">},</span></span>
</body></html>
